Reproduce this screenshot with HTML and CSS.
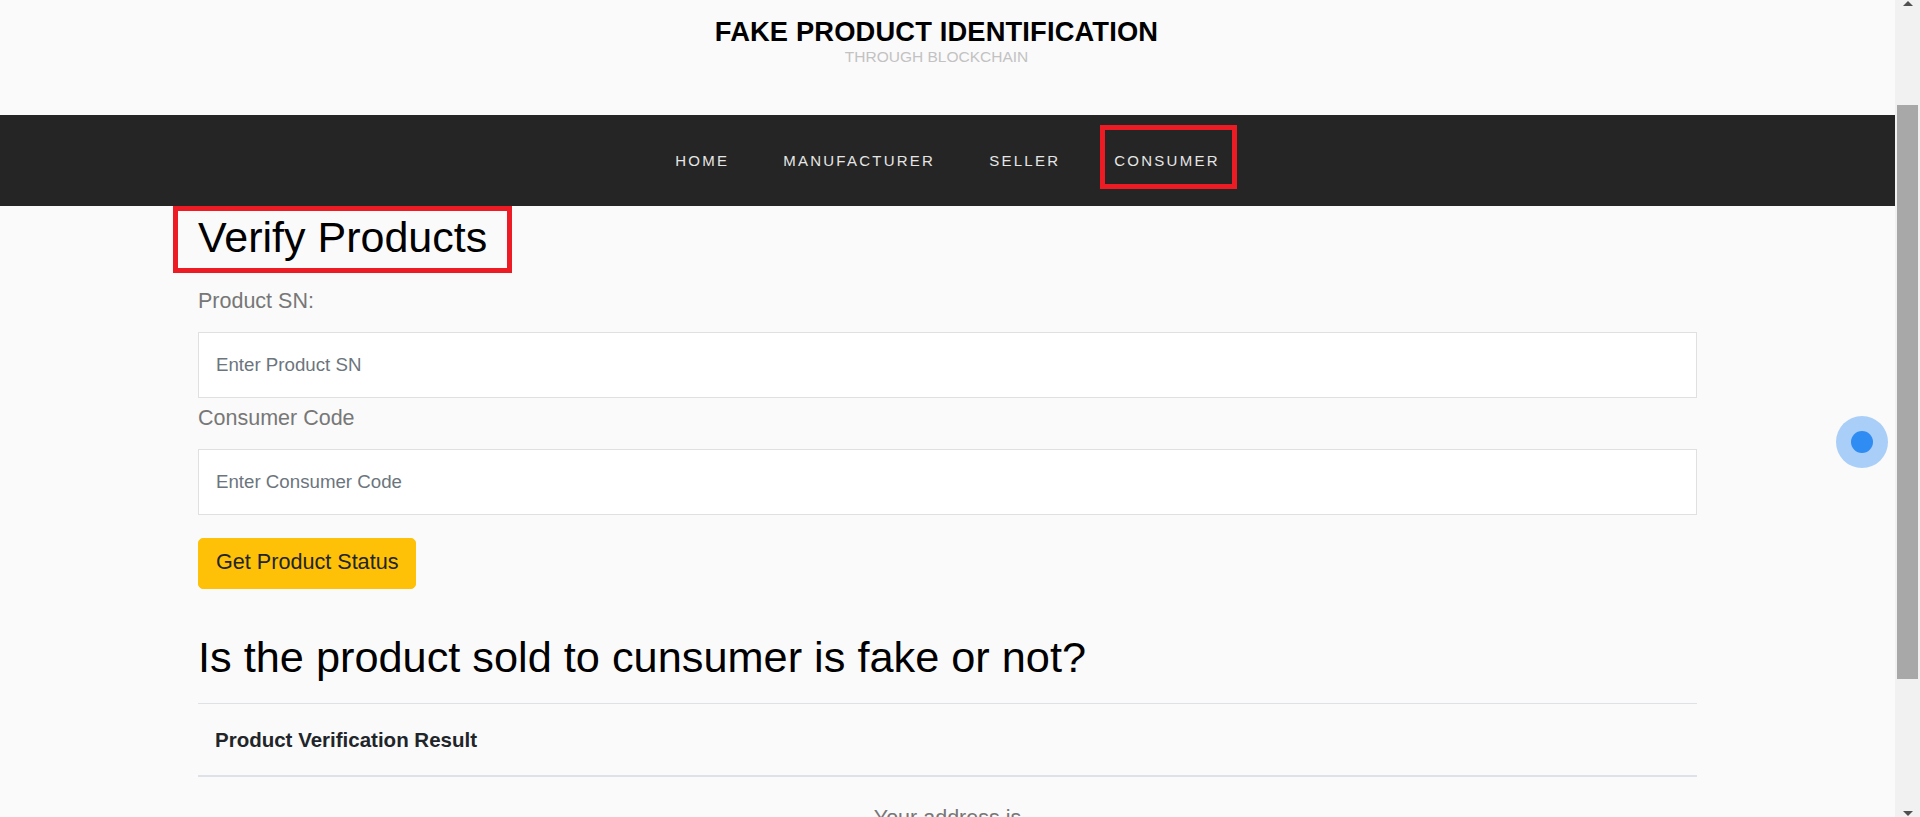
FILE: index.html
```html
<!DOCTYPE html>
<html lang="en">
<head>
<meta charset="utf-8">
<title>Fake Product Identification</title>
<link rel="stylesheet" href="styles.css">
</head>
<body>
<div class="page">
  <div class="main">
    <header class="site-header">
      <h1 class="brand">FAKE PRODUCT IDENTIFICATION</h1>
      <div class="tagline">THROUGH BLOCKCHAIN</div>
    </header>
    <nav class="navbar">
      <ul class="nav-list">
        <li class="nav-item"><a class="nav-link" href="#">HOME</a></li>
        <li class="nav-item"><a class="nav-link" href="#">MANUFACTURER</a></li>
        <li class="nav-item"><a class="nav-link" href="#">SELLER</a></li>
        <li class="nav-item marked"><a class="nav-link" href="#">CONSUMER</a><span class="mark-box"></span></li>
      </ul>
    </nav>
    <section class="content">
      <h2 class="page-title">Verify Products</h2>
      <label class="field-label" for="sn">Product SN:</label>
      <input class="field-input" id="sn" type="text" placeholder="Enter Product SN">
      <label class="field-label label-second" for="code">Consumer Code</label>
      <input class="field-input" id="code" type="text" placeholder="Enter Consumer Code">
      <button class="btn-status" type="button">Get Product Status</button>
      <h2 class="question">Is the product sold to cunsumer is fake or not?</h2>
      <table class="result-table">
        <thead>
          <tr><th>Product Verification Result</th></tr>
        </thead>
      </table>
      <p class="address">Your address is</p>
    </section>
    <div class="touch-dot"><span class="touch-core"></span></div>
  </div>
  <div class="scrollbar">
    <div class="sb-arrow sb-up"></div>
    <div class="sb-gap"></div>
    <div class="sb-thumb"></div>
    <div class="sb-fill"></div>
    <div class="sb-arrow sb-down"></div>
  </div>
</div>
</body>
</html>
```
FILE: styles.css
```css
html, body {
  margin: 0;
  padding: 0;
}
body {
  background: #fafafa;
  font-family: "Liberation Sans", Arial, Helvetica, sans-serif;
  color: #000;
  height: 817px;
  overflow: hidden;
}
.page {
  display: flex;
  height: 817px;
}
.main {
  flex: 1;
  position: relative;
  overflow: hidden;
}

/* header */
.site-header {
  box-sizing: border-box;
  height: 115px;
  padding: 18px 22px 0 0;
  text-align: center;
}
.brand {
  margin: 0;
  font-size: 27.3px;
  line-height: 27px;
  letter-spacing: 0.15px;
  font-weight: bold;
  color: #000;
}
.tagline {
  margin-top: 4px;
  font-size: 15.5px;
  line-height: 15.5px;
  color: #c2c2c2;
}

/* navbar */
.navbar {
  height: 91px;
  background: #252525;
  display: flex;
  justify-content: center;
}
.nav-list {
  display: flex;
  list-style: none;
  margin: 0;
  padding: 0;
}
.nav-item {
  position: relative;
  display: flex;
  align-items: center;
}
.nav-link {
  display: block;
  padding: 0 27px;
  font-size: 15px;
  letter-spacing: 2.25px;
  color: #e6e6e6;
  text-decoration: none;
  line-height: 18px;
}
.mark-box {
  position: absolute;
  left: 13px;
  right: 10px;
  top: 10px;
  bottom: 17px;
  border: 5px solid #ed1c24;
}

/* content */
.content {
  padding: 0 198px;
}
.page-title {
  display: inline-block;
  margin: 0 0 0 -25px;
  padding: 0 20px 4px;
  border: 5px solid #ed1c24;
  font-size: 43px;
  line-height: 53px;
  font-weight: normal;
  color: #000;
}
.field-label {
  display: block;
  margin-top: 12px;
  font-size: 21.5px;
  line-height: 32px;
  color: #777;
}
.label-second {
  margin-top: 4px;
}
.field-input {
  display: block;
  box-sizing: border-box;
  width: 100%;
  height: 66px;
  margin-top: 15px;
  padding: 0 17px;
  border: 1px solid #e0e0e0;
  border-radius: 0;
  background: #fff;
  font-family: "Liberation Sans", Arial, Helvetica, sans-serif;
  font-size: 18.7px;
  color: #495057;
  outline: none;
}
.field-input::placeholder {
  color: #6c757d;
  opacity: 1;
}
.btn-status {
  display: block;
  box-sizing: border-box;
  height: 51px;
  margin-top: 23px;
  padding: 5px 17px 9px;
  border: 1px solid #ffc107;
  border-radius: 5px;
  background: #ffc107;
  font-family: "Liberation Sans", Arial, Helvetica, sans-serif;
  font-size: 21.6px;
  line-height: 35px;
  color: #212529;
}
.question {
  margin: 43px 0 0;
  font-size: 43.3px;
  line-height: 51.6px;
  font-weight: normal;
  color: #000;
}
.result-table {
  width: 100%;
  margin-top: 19px;
  border-collapse: collapse;
}
.result-table th {
  text-align: left;
  padding: 0 17px;
  height: 71px;
  line-height: 71px;
  font-size: 20.5px;
  font-weight: bold;
  color: #212529;
  border-top: 1px solid #dee2e6;
  border-bottom: 2px solid #dee2e6;
}
.address {
  margin: 25px 0 0;
  text-align: center;
  font-size: 21.5px;
  line-height: 32px;
  color: #777;
}

/* touch indicator overlay */
.touch-dot {
  position: absolute;
  left: 1836px;
  top: 416px;
  width: 52px;
  height: 52px;
  border-radius: 50%;
  background: #a9cef8;
  display: flex;
  align-items: center;
  justify-content: center;
}
.touch-core {
  width: 22px;
  height: 22px;
  border-radius: 50%;
  background: #2f8cf2;
}

/* scrollbar */
.scrollbar {
  width: 25px;
  background: #f1f1f1;
  display: flex;
  flex-direction: column;
  align-items: center;
}
.sb-arrow {
  width: 0;
  height: 0;
  border-left: 5px solid transparent;
  border-right: 5px solid transparent;
}
.sb-up {
  margin-top: 1px;
  border-bottom: 5px solid #505050;
}
.sb-down {
  margin-bottom: 1px;
  border-top: 5px solid #505050;
}
.sb-gap {
  height: 99px;
}
.sb-thumb {
  width: 21px;
  height: 574px;
  background: #a8a8a8;
}
.sb-fill {
  flex: 1;
}
```
